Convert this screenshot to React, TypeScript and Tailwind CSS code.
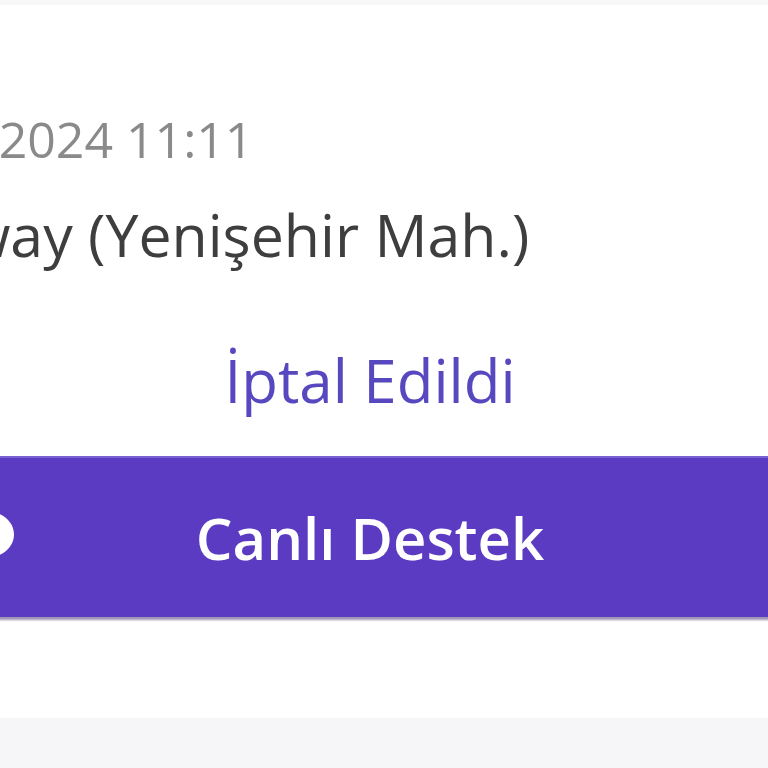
import React from "react";

// Sipariş kartı - iptal edilmiş sipariş, alt kısımda canlı destek butonu
const ChatBubble = () => (
  <svg viewBox="0 0 24 24" className="w-[60px] h-[60px]" fill="#ffffff">
    <path d="M12 2C6.5 2 2 6 2 11c0 2.6 1.2 4.9 3.2 6.6L4.5 22l4.6-2.4c.9.3 1.9.4 2.9.4 5.5 0 10-4 10-9s-4.5-9-10-9z" />
  </svg>
);

const App: React.FC = () => {
  return (
    <div
      className="w-[768px] h-[768px] overflow-hidden bg-[#f6f6f8] flex flex-col"
      style={{ fontFamily: '"Open Sans", "Noto Sans", sans-serif' }}
    >
      <div className="h-[5px] bg-[#f8f8f9] shrink-0" />

      {/* Kart */}
      <div className="h-[713px] shrink-0 bg-white -ml-[260px] w-[1260px] flex flex-col">
        <div className="pl-[118px] pt-[104px]">
          <p className="text-[50px] leading-[1.2] text-[#8a8a8a] whitespace-nowrap">
            15.03.2024 11:11
          </p>
          <p className="mt-[30px] pl-[2px] text-[59px] leading-[1.22] text-[#3e3e3e] whitespace-nowrap">
            Subway (Yenişehir Mah.)
          </p>
        </div>

        <p className="mt-[73px] text-center text-[60px] leading-[1.2] text-[#5848c0] whitespace-nowrap">
          İptal Edildi
        </p>

        <button className="mt-[40px] h-[161px] w-full flex items-center bg-[#5a3bc1] border-t-2 border-[#7b62d2] shadow-[0_3px_2px_rgba(40,20,90,0.45)]">
          <div className="w-[279px] shrink-0 flex justify-end">
            <ChatBubble />
          </div>
          <span className="flex-1 text-center text-[58px] font-semibold text-white whitespace-nowrap">
            Canlı Destek
          </span>
          <div className="w-[279px] shrink-0" />
        </button>
      </div>
    </div>
  );
};

export default App;
